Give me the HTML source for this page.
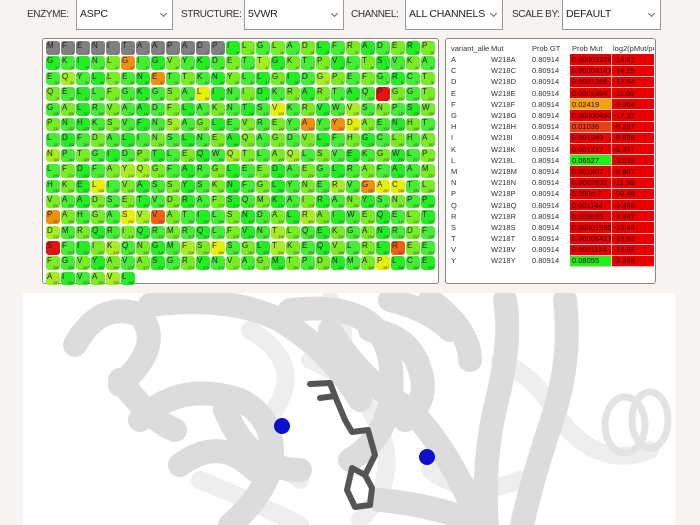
<!DOCTYPE html>
<html><head><meta charset="utf-8">
<style>
*{box-sizing:border-box;margin:0;padding:0}
body{width:700px;height:525px;background:#f6f3f0;font-family:"Liberation Sans",sans-serif;position:relative;overflow:hidden;color:#333}
.lbl{position:absolute;top:9px;font-size:10px;letter-spacing:-0.4px;color:#333}
.sel{position:absolute;top:0;height:30px;background:#fff;border:1px solid #999;border-top:none;font-size:10.5px;padding:8px 3px;color:#222;letter-spacing:-0.2px}
.sel:after{content:"";position:absolute;right:6px;top:11px;width:4px;height:4px;border-right:1px solid #666;border-bottom:1px solid #666;transform:rotate(45deg)}
.pan{position:absolute;top:38px;height:246px;background:#fff;border:1px solid #888;border-radius:3px}
#grid{position:absolute;left:3px;top:2px;display:grid;grid-template-columns:repeat(26,14px);grid-auto-rows:13.5px;column-gap:1px;row-gap:1.9px}
#grid i{font-style:normal;position:relative;border-radius:3px;background:#22ee22;font-size:8px;line-height:9px;padding-left:1px;color:#222}
#grid i b{position:absolute;right:1px;bottom:0;font-size:3.5px;line-height:4px;font-weight:normal;color:#444}
#grid i.x{background:#808080}
#grid i.l{background:#44ee33}
#grid i.m{background:#77ee22}
#grid i.n{background:#a6ee22}
#grid i.y{background:#e6f000}
#grid i.o{background:#f09010}
#grid i.r{background:#e81010}
#grid i.q{background:#f06010}
table{position:absolute;left:3px;top:3px;border-collapse:collapse;font-size:7.5px;color:#333;table-layout:fixed;width:205px}
td{height:11.2px;padding:0 0 0 2px;white-space:nowrap;overflow:hidden;text-align:left}
td.d{background:#e80000;border-bottom:1px solid #f6c0c0;color:#300}td.e{background:#e80000;border-bottom:1px solid #f6c0c0;border-left:1px solid #f6c0c0;color:#300}
tr.h td{height:12px}
#view{position:absolute;left:23px;top:293px;width:652px;height:232px;background:#fff;overflow:hidden}
</style></head><body>
<div class="lbl" style="left:27px">ENZYME:</div><div class="sel" style="left:76px;width:97px">ASPC</div>
<div class="lbl" style="left:181px">STRUCTURE:</div><div class="sel" style="left:244px;width:100px">5VWR</div>
<div class="lbl" style="left:351px">CHANNEL:</div><div class="sel" style="left:405px;width:98px">ALL CHANNELS</div>
<div class="lbl" style="left:512px">SCALE BY:</div><div class="sel" style="left:562px;width:99px">DEFAULT</div>

<div class="pan" style="left:42px;width:397px"><div id="grid">
<i class="x">M<b>1</b></i><i class="x">F<b>2</b></i><i class="x">E<b>3</b></i><i class="x">N<b>4</b></i><i class="x">I<b>5</b></i><i class="x">T<b>6</b></i><i class="x">A<b>7</b></i><i class="x">A<b>8</b></i><i class="x">P<b>9</b></i><i class="x">A<b>10</b></i><i class="x">D<b>11</b></i><i class="x">P<b>12</b></i><i>I<b>13</b></i><i class="m">L<b>14</b></i><i class="l">G<b>15</b></i><i class="m">L<b>16</b></i><i class="l">A<b>17</b></i><i class="m">D<b>18</b></i><i>L<b>19</b></i><i class="l">F<b>20</b></i><i class="m">R<b>21</b></i><i>A<b>22</b></i><i class="l">D<b>23</b></i><i class="m">E<b>24</b></i><i>R<b>25</b></i><i class="m">P<b>26</b></i>
<i>G<b>27</b></i><i class="l">K<b>28</b></i><i>I<b>29</b></i><i class="l">N<b>30</b></i><i class="m">L<b>31</b></i><i class="o">G<b>32</b></i><i class="l">I<b>33</b></i><i>G<b>34</b></i><i class="m">V<b>35</b></i><i class="l">Y<b>36</b></i><i>K<b>37</b></i><i class="l">D<b>38</b></i><i class="m">E<b>39</b></i><i class="l">T<b>40</b></i><i class="n">T<b>41</b></i><i>G<b>42</b></i><i class="m">K<b>43</b></i><i class="l">T<b>44</b></i><i class="m">P<b>45</b></i><i>V<b>46</b></i><i class="l">L<b>47</b></i><i class="m">T<b>48</b></i><i>S<b>49</b></i><i class="l">V<b>50</b></i><i class="m">K<b>51</b></i><i class="l">A<b>52</b></i>
<i class="l">E<b>53</b></i><i class="n">Q<b>54</b></i><i class="l">Y<b>55</b></i><i>L<b>56</b></i><i class="m">L<b>57</b></i><i class="l">E<b>58</b></i><i>N<b>59</b></i><i class="o">E<b>60</b></i><i class="l">T<b>61</b></i><i class="m">T<b>62</b></i><i class="l">K<b>63</b></i><i>N<b>64</b></i><i class="m">Y<b>65</b></i><i class="l">L<b>66</b></i><i>L<b>67</b></i><i class="m">G<b>68</b></i><i>I<b>69</b></i><i class="l">D<b>70</b></i><i class="n">G<b>71</b></i><i class="m">P<b>72</b></i><i class="l">E<b>73</b></i><i class="m">F<b>74</b></i><i class="l">G<b>75</b></i><i>R<b>76</b></i><i class="l">C<b>77</b></i><i class="m">T<b>78</b></i>
<i class="m">Q<b>79</b></i><i class="l">E<b>80</b></i><i>L<b>81</b></i><i class="l">L<b>82</b></i><i class="m">F<b>83</b></i><i class="l">G<b>84</b></i><i>K<b>85</b></i><i class="l">G<b>86</b></i><i class="m">S<b>87</b></i><i class="l">A<b>88</b></i><i class="y">L<b>89</b></i><i>I<b>90</b></i><i class="l">N<b>91</b></i><i class="m">I<b>92</b></i><i>D<b>93</b></i><i class="l">K<b>94</b></i><i class="m">R<b>95</b></i><i>A<b>96</b></i><i class="m">R<b>97</b></i><i class="l">T<b>98</b></i><i>A<b>99</b></i><i class="l">Q<b>100</b></i><i class="r">P<b>101</b></i><i class="m">G<b>102</b></i><i class="l">G<b>103</b></i><i class="m">T<b>104</b></i>
<i class="l">G<b>105</b></i><i class="m">A<b>106</b></i><i>L<b>107</b></i><i class="l">R<b>108</b></i><i class="m">V<b>109</b></i><i class="l">A<b>110</b></i><i>A<b>111</b></i><i class="l">D<b>112</b></i><i class="m">F<b>113</b></i><i>L<b>114</b></i><i class="l">A<b>115</b></i><i class="m">K<b>116</b></i><i class="l">N<b>117</b></i><i>T<b>118</b></i><i class="l">S<b>119</b></i><i class="y">V<b>120</b></i><i class="l">K<b>121</b></i><i class="m">R<b>122</b></i><i>V<b>123</b></i><i class="l">W<b>124</b></i><i class="n">V<b>125</b></i><i class="l">S<b>126</b></i><i class="m">N<b>127</b></i><i class="l">P<b>128</b></i><i>S<b>129</b></i><i class="m">W<b>130</b></i>
<i class="m">P<b>131</b></i><i class="l">N<b>132</b></i><i>H<b>133</b></i><i class="l">K<b>134</b></i><i class="m">S<b>135</b></i><i class="l">V<b>136</b></i><i>F<b>137</b></i><i class="l">N<b>138</b></i><i class="n">S<b>139</b></i><i class="l">A<b>140</b></i><i class="m">G<b>141</b></i><i>L<b>142</b></i><i class="l">E<b>143</b></i><i class="m">V<b>144</b></i><i class="l">R<b>145</b></i><i class="m">E<b>146</b></i><i class="l">Y<b>147</b></i><i class="o">A<b>148</b></i><i class="l">Y<b>149</b></i><i class="o">Y<b>150</b></i><i class="y">D<b>151</b></i><i class="m">A<b>152</b></i><i class="l">E<b>153</b></i><i>N<b>154</b></i><i class="m">H<b>155</b></i><i class="l">T<b>156</b></i>
<i class="l">L<b>157</b></i><i>D<b>158</b></i><i class="l">F<b>159</b></i><i class="m">D<b>160</b></i><i class="l">A<b>161</b></i><i>L<b>162</b></i><i class="l">I<b>163</b></i><i class="m">N<b>164</b></i><i class="l">S<b>165</b></i><i>L<b>166</b></i><i class="l">N<b>167</b></i><i class="m">E<b>168</b></i><i>A<b>169</b></i><i class="m">Q<b>170</b></i><i class="l">A<b>171</b></i><i class="m">G<b>172</b></i><i class="l">D<b>173</b></i><i class="m">V<b>174</b></i><i>L<b>175</b></i><i class="l">F<b>176</b></i><i class="m">H<b>177</b></i><i>G<b>178</b></i><i class="l">C<b>179</b></i><i class="m">L<b>180</b></i><i class="l">H<b>181</b></i><i class="m">A<b>182</b></i>
<i class="n">N<b>183</b></i><i class="l">P<b>184</b></i><i class="m">T<b>185</b></i><i class="l">G<b>186</b></i><i>I<b>187</b></i><i class="l">D<b>188</b></i><i class="m">P<b>189</b></i><i>T<b>190</b></i><i class="l">L<b>191</b></i><i class="m">E<b>192</b></i><i>Q<b>193</b></i><i class="l">W<b>194</b></i><i class="n">Q<b>195</b></i><i class="m">T<b>196</b></i><i class="l">L<b>197</b></i><i class="m">A<b>198</b></i><i class="n">Q<b>199</b></i><i class="l">L<b>200</b></i><i class="m">S<b>201</b></i><i class="l">V<b>202</b></i><i>E<b>203</b></i><i class="l">K<b>204</b></i><i class="m">G<b>205</b></i><i>W<b>206</b></i><i class="l">L<b>207</b></i><i class="m">P<b>208</b></i>
<i class="l">L<b>209</b></i><i class="m">F<b>210</b></i><i>D<b>211</b></i><i class="l">F<b>212</b></i><i class="m">A<b>213</b></i><i class="n">Y<b>214</b></i><i class="n">Q<b>215</b></i><i class="m">G<b>216</b></i><i class="l">F<b>217</b></i><i>A<b>218</b></i><i class="l">R<b>219</b></i><i class="m">G<b>220</b></i><i>L<b>221</b></i><i class="l">E<b>222</b></i><i class="m">E<b>223</b></i><i>D<b>224</b></i><i class="l">A<b>225</b></i><i class="m">E<b>226</b></i><i class="l">G<b>227</b></i><i>L<b>228</b></i><i class="l">R<b>229</b></i><i class="m">A<b>230</b></i><i class="l">F<b>231</b></i><i>A<b>232</b></i><i class="l">A<b>233</b></i><i class="m">M<b>234</b></i>
<i class="l">H<b>235</b></i><i class="m">K<b>236</b></i><i>E<b>237</b></i><i class="y">L<b>238</b></i><i class="l">I<b>239</b></i><i class="m">V<b>240</b></i><i>A<b>241</b></i><i class="l">S<b>242</b></i><i class="m">S<b>243</b></i><i>Y<b>244</b></i><i class="l">S<b>245</b></i><i class="m">K<b>246</b></i><i>N<b>247</b></i><i class="l">F<b>248</b></i><i class="m">G<b>249</b></i><i>L<b>250</b></i><i class="l">Y<b>251</b></i><i class="m">N<b>252</b></i><i class="l">E<b>253</b></i><i class="n">R<b>254</b></i><i class="l">V<b>255</b></i><i class="o">G<b>256</b></i><i class="y">A<b>257</b></i><i class="y">C<b>258</b></i><i class="l">T<b>259</b></i><i class="m">L<b>260</b></i>
<i class="m">V<b>261</b></i><i class="l">A<b>262</b></i><i>A<b>263</b></i><i class="m">D<b>264</b></i><i class="l">S<b>265</b></i><i class="m">E<b>266</b></i><i>T<b>267</b></i><i class="l">V<b>268</b></i><i class="m">D<b>269</b></i><i>R<b>270</b></i><i class="l">A<b>271</b></i><i class="m">F<b>272</b></i><i>S<b>273</b></i><i class="l">Q<b>274</b></i><i class="m">M<b>275</b></i><i>K<b>276</b></i><i class="l">A<b>277</b></i><i class="m">I<b>278</b></i><i>R<b>279</b></i><i class="l">A<b>280</b></i><i class="m">N<b>281</b></i><i>Y<b>282</b></i><i class="l">S<b>283</b></i><i class="m">N<b>284</b></i><i class="l">P<b>285</b></i><i>P<b>286</b></i>
<i class="o">P<b>287</b></i><i class="m">A<b>288</b></i><i class="l">H<b>289</b></i><i class="m">G<b>290</b></i><i class="l">A<b>291</b></i><i class="y">S<b>292</b></i><i class="n">V<b>293</b></i><i class="q">V<b>294</b></i><i class="m">A<b>295</b></i><i class="l">T<b>296</b></i><i>I<b>297</b></i><i class="l">L<b>298</b></i><i class="m">S<b>299</b></i><i>N<b>300</b></i><i class="l">D<b>301</b></i><i class="m">A<b>302</b></i><i>L<b>303</b></i><i class="n">R<b>304</b></i><i class="m">A<b>305</b></i><i>I<b>306</b></i><i class="l">W<b>307</b></i><i class="m">E<b>308</b></i><i>Q<b>309</b></i><i class="l">E<b>310</b></i><i class="m">L<b>311</b></i><i>T<b>312</b></i>
<i class="n">D<b>313</b></i><i class="l">M<b>314</b></i><i class="m">R<b>315</b></i><i>Q<b>316</b></i><i class="l">R<b>317</b></i><i class="m">I<b>318</b></i><i>Q<b>319</b></i><i class="l">R<b>320</b></i><i class="m">M<b>321</b></i><i class="l">R<b>322</b></i><i>Q<b>323</b></i><i class="l">L<b>324</b></i><i class="m">F<b>325</b></i><i>V<b>326</b></i><i class="l">N<b>327</b></i><i class="n">T<b>328</b></i><i class="m">L<b>329</b></i><i class="l">Q<b>330</b></i><i>E<b>331</b></i><i class="m">K<b>332</b></i><i class="l">G<b>333</b></i><i class="m">A<b>334</b></i><i>N<b>335</b></i><i class="l">R<b>336</b></i><i class="m">D<b>337</b></i><i class="l">F<b>338</b></i>
<i class="r">S<b>339</b></i><i class="l">F<b>340</b></i><i>I<b>341</b></i><i class="m">I<b>342</b></i><i class="n">K<b>343</b></i><i class="l">Q<b>344</b></i><i class="m">N<b>345</b></i><i>G<b>346</b></i><i class="l">M<b>347</b></i><i class="n">F<b>348</b></i><i class="m">S<b>349</b></i><i class="y">F<b>350</b></i><i class="l">S<b>351</b></i><i class="m">G<b>352</b></i><i>L<b>353</b></i><i class="n">T<b>354</b></i><i class="m">K<b>355</b></i><i class="l">E<b>356</b></i><i>Q<b>357</b></i><i class="m">V<b>358</b></i><i class="l">L<b>359</b></i><i class="m">R<b>360</b></i><i>L<b>361</b></i><i class="q">R<b>362</b></i><i class="m">E<b>363</b></i><i class="l">E<b>364</b></i>
<i class="m">F<b>365</b></i><i class="l">G<b>366</b></i><i class="m">V<b>367</b></i><i>Y<b>368</b></i><i class="m">A<b>369</b></i><i class="l">V<b>370</b></i><i class="m">A<b>371</b></i><i>S<b>372</b></i><i class="l">G<b>373</b></i><i class="m">R<b>374</b></i><i>V<b>375</b></i><i class="l">N<b>376</b></i><i class="m">V<b>377</b></i><i class="l">A<b>378</b></i><i class="m">G<b>379</b></i><i>M<b>380</b></i><i class="m">T<b>381</b></i><i class="l">P<b>382</b></i><i class="m">D<b>383</b></i><i>N<b>384</b></i><i class="l">M<b>385</b></i><i class="m">A<b>386</b></i><i class="y">P<b>387</b></i><i>L<b>388</b></i><i class="l">C<b>389</b></i><i>E<b>390</b></i>
<i class="n">A<b>391</b></i><i>I<b>392</b></i><i class="l">V<b>393</b></i><i class="m">A<b>394</b></i><i class="n">V<b>395</b></i><i>L<b>396</b></i>
</div></div>

<div class="pan" style="left:445px;width:211px;overflow:hidden"><table>
<colgroup><col style="width:40px"><col style="width:41px"><col style="width:40px"><col style="width:41px"><col style="width:43px"></colgroup>
<tr class="h"><td>variant_allele</td><td>Mut</td><td>Prob GT</td><td>Prob Mut</td><td>log2(pMut/pGT)</td></tr>
<tr><td>A</td><td>W218A</td><td>0.80914</td><td class="d">0.00003229</td><td class="e">-14.61</td></tr>
<tr><td>C</td><td>W218C</td><td>0.80914</td><td class="d">0.00004147</td><td class="e">-14.25</td></tr>
<tr><td>D</td><td>W218D</td><td>0.80914</td><td class="d">0.0001266</td><td class="e">-12.64</td></tr>
<tr><td>E</td><td>W218E</td><td>0.80914</td><td class="d">0.0001984</td><td class="e">-11.99</td></tr>
<tr><td>F</td><td>W218F</td><td>0.80914</td><td class="d" style="background:#f5a300">0.02419</td><td class="e">-5.064</td></tr>
<tr><td>G</td><td>W218G</td><td>0.80914</td><td class="d">0.000004931</td><td class="e">-17.32</td></tr>
<tr><td>H</td><td>W218H</td><td>0.80914</td><td class="d" style="background:#e84010">0.01036</td><td class="e">-6.287</td></tr>
<tr><td>I</td><td>W218I</td><td>0.80914</td><td class="d">0.001949</td><td class="e">-8.698</td></tr>
<tr><td>K</td><td>W218K</td><td>0.80914</td><td class="d">0.001217</td><td class="e">-9.377</td></tr>
<tr><td>L</td><td>W218L</td><td>0.80914</td><td class="d" style="background:#22f01a">0.06527</td><td class="e">-3.632</td></tr>
<tr><td>M</td><td>W218M</td><td>0.80914</td><td class="d">0.001807</td><td class="e">-8.807</td></tr>
<tr><td>N</td><td>W218N</td><td>0.80914</td><td class="d">0.0002632</td><td class="e">-11.59</td></tr>
<tr><td>P</td><td>W218P</td><td>0.80914</td><td class="d">5.550e-7</td><td class="e">-20.48</td></tr>
<tr><td>Q</td><td>W218Q</td><td>0.80914</td><td class="d">0.001144</td><td class="e">-9.466</td></tr>
<tr><td>R</td><td>W218R</td><td>0.80914</td><td class="d">0.003515</td><td class="e">-7.847</td></tr>
<tr><td>S</td><td>W218S</td><td>0.80914</td><td class="d">0.00001585</td><td class="e">-15.64</td></tr>
<tr><td>T</td><td>W218T</td><td>0.80914</td><td class="d">0.00006427</td><td class="e">-13.62</td></tr>
<tr><td>V</td><td>W218V</td><td>0.80914</td><td class="d">0.0001124</td><td class="e">-12.81</td></tr>
<tr><td>Y</td><td>W218Y</td><td>0.80914</td><td class="d" style="background:#22f01a">0.08055</td><td class="e">-3.328</td></tr>
</table></div>

<div id="view"><svg width="652" height="232" viewBox="23 293 652 232">
<g fill="none" stroke-linecap="round" stroke-linejoin="round">
<g stroke="#eeeeee" stroke-width="18">
<path d="M250 330 Q300 360 280 400 Q250 450 300 480"/>
<path d="M310 360 Q360 380 380 430 Q400 480 360 520"/>
<path d="M500 360 Q540 380 560 420 Q600 470 650 450"/>
<path d="M200 480 Q250 500 300 525"/>
<path d="M330 300 Q350 330 340 360"/>
<path d="M430 470 Q470 500 520 480"/>
</g>
<g stroke="#dcdcdc" stroke-width="24">
<path d="M75 345 Q100 300 140 315 Q165 345 120 385"/>
<path d="M150 305 Q230 295 280 320 Q330 350 360 400"/>
<path d="M140 420 Q180 380 240 400 Q280 420 270 470 Q260 500 230 525"/>
<path d="M180 465 Q220 435 255 470"/>
<path d="M290 310 Q380 300 390 360 Q400 430 350 460"/>
<path d="M330 330 Q360 380 410 410 Q450 450 480 525"/>
<path d="M430 300 Q470 330 470 360"/>
<path d="M505 300 Q512 340 497 400 Q482 460 487 525"/>
<path d="M565 300 Q572 360 552 420 Q532 480 522 525"/>
<path d="M390 300 Q430 310 450 330"/>
<path d="M225 410 Q250 470 300 470"/>
<path d="M470 520 Q430 505 380 500"/>
<path d="M370 330 Q410 335 420 370 Q430 400 405 420"/>
<path d="M120 380 Q150 420 175 430"/>
</g>
<g stroke="#e3e3e3" stroke-width="7">
<ellipse cx="625" cy="425" rx="20" ry="28"/>
<ellipse cx="650" cy="420" rx="18" ry="28"/>
</g>
<g stroke="#555" stroke-width="6">
<path d="M310 384 L330 383 L335 396 L320 398 M335 396 L345 420 L352 432 L368 430 L375 455 L365 475 L352 468 L347 490 L355 507 L370 505 L372 488 L365 475"/>
</g>
</g>
<circle cx="282" cy="426" r="8" fill="#0c10c8"/>
<circle cx="427" cy="457" r="8" fill="#0c10c8"/>
</svg></div>
</body></html>
